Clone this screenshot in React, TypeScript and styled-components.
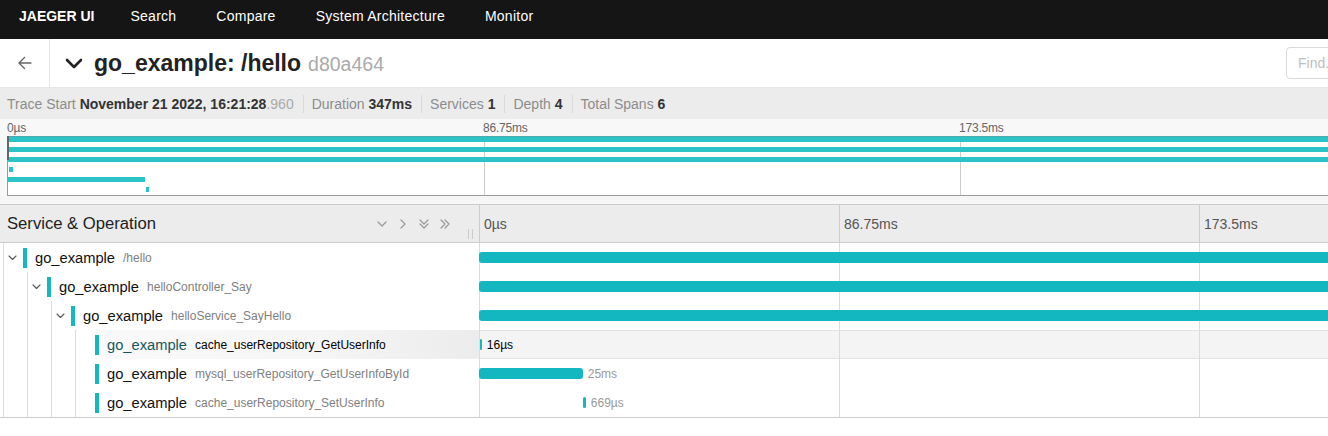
import React from "react";
import styled, { createGlobalStyle, css } from "styled-components";

const GlobalStyle = createGlobalStyle`
  html, body { margin: 0; padding: 0; overflow: hidden; background: #fff; }
  body { font-family: "Liberation Sans", Arial, Helvetica, sans-serif; color: #222; }
  *, *::before, *::after { box-sizing: border-box; }
`;

const TRACE_MS = 347;
const LEFT_W = 479;
const RIGHT_W = 1440;
const MINI_W = 1903;
const TEAL = "#12b7bf";
const MINI_TEAL = "#29c3c8";

type Span = {
  depth: number;
  op: string;
  start: number;
  dur: number;
  hasChildren?: boolean;
  label?: string;
  hovered?: boolean;
};

const spans: Span[] = [
  { depth: 0, op: "/hello", start: 0, dur: 347, hasChildren: true },
  { depth: 1, op: "helloController_Say", start: 0.03, dur: 346.9, hasChildren: true },
  { depth: 2, op: "helloService_SayHello", start: 0.06, dur: 346.8, hasChildren: true },
  { depth: 3, op: "cache_userRepository_GetUserInfo", start: 0.2, dur: 0.016, label: "16µs", hovered: true },
  { depth: 3, op: "mysql_userRepository_GetUserInfoById", start: 0.0, dur: 25, label: "25ms" },
  { depth: 3, op: "cache_userRepository_SetUserInfo", start: 25.08, dur: 0.669, label: "669µs" },
];

const ticks = ["0µs", "86.75ms", "173.5ms"];

/* ---------- top nav ---------- */
const Nav = styled.nav`
  display: flex;
  align-items: center;
  height: 39px;
  padding: 0 0 7px 19px;
  background: #151515;
`;
const Brand = styled.a`
  font-size: 14px;
  font-weight: 700;
  color: #fff;
  padding-right: 16px;
`;
const NavItem = styled.a`
  font-size: 14px;
  letter-spacing: 0.25px;
  color: #fff;
  padding: 0 20px;
`;

/* ---------- trace header ---------- */
const Page = styled.div`
  width: 1920px;
`;
const TitleRow = styled.header`
  display: flex;
  align-items: stretch;
  height: 49px;
  border-bottom: 1px solid #e6e6e6;
`;
const BackButton = styled.a`
  width: 50px;
  flex-shrink: 0;
  display: flex;
  align-items: center;
  justify-content: center;
  border-right: 1px solid #e6e6e6;
`;
const TitleBlock = styled.div`
  flex: 1;
  display: flex;
  align-items: center;
  padding-left: 14px;
  gap: 10px;
`;
const TitleText = styled.h1`
  margin: 0;
  font-size: 23px;
  font-weight: 700;
  color: #222;
  white-space: nowrap;
`;
const TraceId = styled.small`
  font-size: 19.5px;
  font-weight: 400;
  color: #aaa;
  margin-left: 7px;
`;
const Tools = styled.div`
  width: 634px;
  flex-shrink: 0;
  display: flex;
  align-items: center;
  gap: 8px;
`;
const FindInput = styled.input`
  width: 250px;
  height: 32px;
  border: 1px solid #d9d9d9;
  border-radius: 4px;
  padding: 0 11px;
  font-family: inherit;
  font-size: 14px;
  color: #333;
  outline: none;
  &::placeholder { color: #bfbfbf; }
`;
const ToolButton = styled.button`
  height: 32px;
  padding: 0 15px;
  border: 1px solid #d9d9d9;
  border-radius: 4px;
  background: #fff;
  font-family: inherit;
  font-size: 14px;
  color: #333;
`;

/* ---------- stats ---------- */
const Stats = styled.div`
  display: flex;
  align-items: center;
  height: 31px;
  padding-left: 7px;
  background: #ececec;
  font-size: 14px;
  color: #8c8c8c;
  white-space: nowrap;
`;
const StatValue = styled.strong`
  color: #333;
  font-weight: 700;
`;
const StatMuted = styled.span`
  color: #aaa;
`;
const StatDivider = styled.span`
  width: 1px;
  height: 18px;
  background: #dadada;
  margin: 0 8px 0 9px;
`;

/* ---------- minimap ---------- */
const Minimap = styled.section`
  padding: 0 9px 0 7px;
  background: #f8f8f8;
`;
const MiniTicks = styled.div`
  position: relative;
  height: 17px;
`;
const MiniTickLabel = styled.span`
  position: absolute;
  top: 0;
  font-size: 12px;
  line-height: 18px;
  color: #666;
  letter-spacing: -0.2px;
`;
const MiniCanvas = styled.div`
  position: relative;
  height: 60px;
  background: #fff;
  border-left: 1px solid #999;
  border-bottom: 1px solid #999;
`;
const MiniTickLine = styled.div`
  position: absolute;
  top: 0;
  bottom: 0;
  width: 1px;
  background: #ccc;
`;
const MiniBar = styled.div`
  position: absolute;
  height: 5px;
  background: ${MINI_TEAL};
`;
const MiniHandle = styled.div`
  position: absolute;
  left: -1px;
  top: 0;
  width: 2px;
  height: 24px;
  background: #666;
`;
const MiniTopEdge = styled.div`
  position: absolute;
  left: 0;
  right: 0;
  top: 0;
  height: 1px;
  background: #4fa9ad;
`;
const Spacer = styled.div`
  height: 8px;
  background: #f6f6f6;
`;

/* ---------- timeline ---------- */
const TimelineHeader = styled.div`
  display: grid;
  grid-template-columns: ${LEFT_W}px ${RIGHT_W}px;
  height: 39px;
  background: #ececec;
  border-top: 1px solid #ccc;
  border-bottom: 1px solid #ccc;
`;
const HeaderLeft = styled.div`
  position: relative;
  display: flex;
  align-items: center;
  justify-content: space-between;
  padding: 0 27px 0 7px;
`;
const HeaderTitle = styled.h3`
  margin: 0;
  font-size: 16.65px;
  font-weight: 400;
  color: #222;
`;
const Collapser = styled.div`
  display: flex;
  gap: 7px;
`;
const Resizer = styled.div`
  position: absolute;
  right: 6px;
  top: 24px;
  width: 5px;
  height: 10px;
  border-left: 1px solid #ccc;
  border-right: 1px solid #ccc;
`;
const HeaderRight = styled.div`
  position: relative;
`;
const HeaderTick = styled.div`
  position: absolute;
  top: 0;
  bottom: 0;
  border-left: 1px solid #ccc;
  padding-left: 4px;
  font-size: 14px;
  line-height: 38px;
  color: #555;
  white-space: nowrap;
`;

const Rows = styled.div`
  border-bottom: 1px solid #ccc;
`;
const Row = styled.div`
  display: grid;
  grid-template-columns: ${LEFT_W}px ${RIGHT_W}px;
  height: 29px;
`;
const LeftCell = styled.div`
  display: flex;
  align-items: stretch;
  min-width: 0;
`;
const guideLine = css`
  position: relative;
  flex-shrink: 0;
  &::before {
    content: "";
    position: absolute;
    left: 3px;
    top: 0;
    bottom: 0;
    width: 1px;
    background: #dcdcdc;
  }
`;
const Guide = styled.span`
  ${guideLine};
  width: 24px;
`;
const Toggle = styled.span`
  ${guideLine};
  width: 23px;
  display: flex;
  align-items: center;
  padding-left: 8px;
`;
const NameWrapper = styled.div<{ $hovered?: boolean }>`
  flex: 1;
  display: flex;
  align-items: center;
  gap: 8px;
  white-space: nowrap;
  overflow: hidden;
  ${(p) =>
    p.$hovered &&
    css`
      background: linear-gradient(90deg, #fafafa, #f5f5f5 60%, #ececec);
    `}
`;
const ColorBar = styled.span`
  width: 4px;
  height: 20px;
  flex-shrink: 0;
  background: ${TEAL};
`;
const SvcName = styled.span<{ $hovered?: boolean }>`
  font-size: 14.7px;
  color: ${(p) => (p.$hovered ? "#17575c" : "#111")};
`;
const OpName = styled.span<{ $hovered?: boolean }>`
  font-size: 12px;
  color: ${(p) => (p.$hovered ? "#000" : "#808080")};
`;
const RightCell = styled.div<{ $hovered?: boolean }>`
  position: relative;
  ${(p) =>
    p.$hovered &&
    css`
      background: #f4f4f4;
      box-shadow: inset 0 1px 0 #e2e2e2, inset 0 -1px 0 #e2e2e2;
    `}
`;
const RowTick = styled.div`
  position: absolute;
  top: 0;
  bottom: 0;
  width: 1px;
  background: #dcdcdc;
`;
const SpanBar = styled.div`
  position: absolute;
  top: 9px;
  height: 11px;
  border-radius: 3px;
  background: ${TEAL};
`;
const SpanLabel = styled.span<{ $hovered?: boolean }>`
  position: absolute;
  top: 0;
  font-size: 12px;
  line-height: 30px;
  color: ${(p) => (p.$hovered ? "#000" : "#999")};
  white-space: nowrap;
`;

/* ---------- icons ---------- */
const BackArrow = () => (
  <svg width="16" height="16" viewBox="0 0 16 16" fill="none" stroke="#666" strokeWidth="1.4" strokeLinecap="round" strokeLinejoin="round">
    <path d="M14 8H2M7.5 2.5L2 8l5.5 5.5" />
  </svg>
);
const TitleChevron = () => (
  <svg width="20" height="20" viewBox="0 0 20 20" fill="none" stroke="#222" strokeWidth="2.6" strokeLinecap="round" strokeLinejoin="round">
    <path d="M3 7l7 7 7-7" />
  </svg>
);
const iconProps = {
  width: 14,
  height: 14,
  viewBox: "0 0 14 14",
  fill: "none",
  stroke: "#999",
  strokeWidth: 1.2,
  strokeLinecap: "round" as const,
  strokeLinejoin: "round" as const,
};
const IconDown = () => (
  <svg {...iconProps}>
    <path d="M3 5l4 4 4-4" />
  </svg>
);
const IconRight = () => (
  <svg {...iconProps}>
    <path d="M5 3l4 4-4 4" />
  </svg>
);
const IconDoubleDown = () => (
  <svg {...iconProps}>
    <path d="M3 3l4 4 4-4M3 7l4 4 4-4" />
  </svg>
);
const IconDoubleRight = () => (
  <svg {...iconProps}>
    <path d="M3 3l4 4-4 4M7 3l4 4-4 4" />
  </svg>
);
const RowChevron = () => (
  <svg width="9" height="6" viewBox="0 0 9 6" fill="none" stroke="#555" strokeWidth="1.1" strokeLinecap="round" strokeLinejoin="round">
    <path d="M1 1l3.5 3.5L8 1" />
  </svg>
);

const pxRight = (ms: number) => (ms * RIGHT_W) / TRACE_MS;
const pxMini = (ms: number) => (ms * MINI_W) / TRACE_MS;

export default function App() {
  return (
    <Page>
      <GlobalStyle />
      <Nav>
        <Brand>JAEGER UI</Brand>
        <NavItem>Search</NavItem>
        <NavItem>Compare</NavItem>
        <NavItem>System Architecture</NavItem>
        <NavItem>Monitor</NavItem>
      </Nav>

      <TitleRow>
        <BackButton>
          <BackArrow />
        </BackButton>
        <TitleBlock>
          <TitleChevron />
          <TitleText>
            go_example: /hello<TraceId>d80a464</TraceId>
          </TitleText>
        </TitleBlock>
        <Tools>
          <FindInput placeholder="Find..." />
          <ToolButton>Trace Timeline</ToolButton>
        </Tools>
      </TitleRow>

      <Stats>
        <span>
          Trace Start <StatValue>November 21 2022, 16:21:28</StatValue>
          <StatMuted>.960</StatMuted>
        </span>
        <StatDivider />
        <span>
          Duration <StatValue>347ms</StatValue>
        </span>
        <StatDivider />
        <span>
          Services <StatValue>1</StatValue>
        </span>
        <StatDivider />
        <span>
          Depth <StatValue>4</StatValue>
        </span>
        <StatDivider />
        <span>
          Total Spans <StatValue>6</StatValue>
        </span>
      </Stats>

      <Minimap>
        <MiniTicks>
          {ticks.map((t, i) => (
            <MiniTickLabel key={t} style={{ left: `${i * 25}%` }}>
              {t}
            </MiniTickLabel>
          ))}
        </MiniTicks>
        <MiniCanvas>
          {[1, 2, 3].map((i) => (
            <MiniTickLine key={i} style={{ left: `${i * 25}%` }} />
          ))}
          {spans.map((s, i) => (
            <MiniBar
              key={i}
              style={{
                left: pxMini(s.start),
                width: Math.max(pxMini(s.dur), 3.5),
                top: 1 + i * 10,
              }}
            />
          ))}
          <MiniTopEdge />
          <MiniHandle />
        </MiniCanvas>
      </Minimap>
      <Spacer />

      <TimelineHeader>
        <HeaderLeft>
          <HeaderTitle>Service &amp; Operation</HeaderTitle>
          <Collapser>
            <IconDown />
            <IconRight />
            <IconDoubleDown />
            <IconDoubleRight />
          </Collapser>
          <Resizer />
        </HeaderLeft>
        <HeaderRight>
          {ticks.map((t, i) => (
            <HeaderTick key={t} style={{ left: `${i * 25}%` }}>
              {t}
            </HeaderTick>
          ))}
          <RowTick style={{ left: "75%" }} />
        </HeaderRight>
      </TimelineHeader>

      <Rows>
        {spans.map((s, i) => {
          const left = pxRight(s.start);
          const width = Math.max(pxRight(s.dur), 2);
          return (
            <Row key={i}>
              <LeftCell>
                {Array.from({ length: s.depth }).map((_, g) => (
                  <Guide key={g} />
                ))}
                <Toggle>{s.hasChildren && <RowChevron />}</Toggle>
                <NameWrapper $hovered={s.hovered}>
                  <ColorBar />
                  <SvcName $hovered={s.hovered}>go_example</SvcName>
                  <OpName $hovered={s.hovered}>{s.op}</OpName>
                </NameWrapper>
              </LeftCell>
              <RightCell $hovered={s.hovered}>
                {[0, 1, 2, 3].map((t) => (
                  <RowTick key={t} style={{ left: `${t * 25}%` }} />
                ))}
                <SpanBar style={{ left, width }} />
                {s.label && (
                  <SpanLabel $hovered={s.hovered} style={{ left: left + width + 5 }}>
                    {s.label}
                  </SpanLabel>
                )}
              </RightCell>
            </Row>
          );
        })}
      </Rows>
    </Page>
  );
}
